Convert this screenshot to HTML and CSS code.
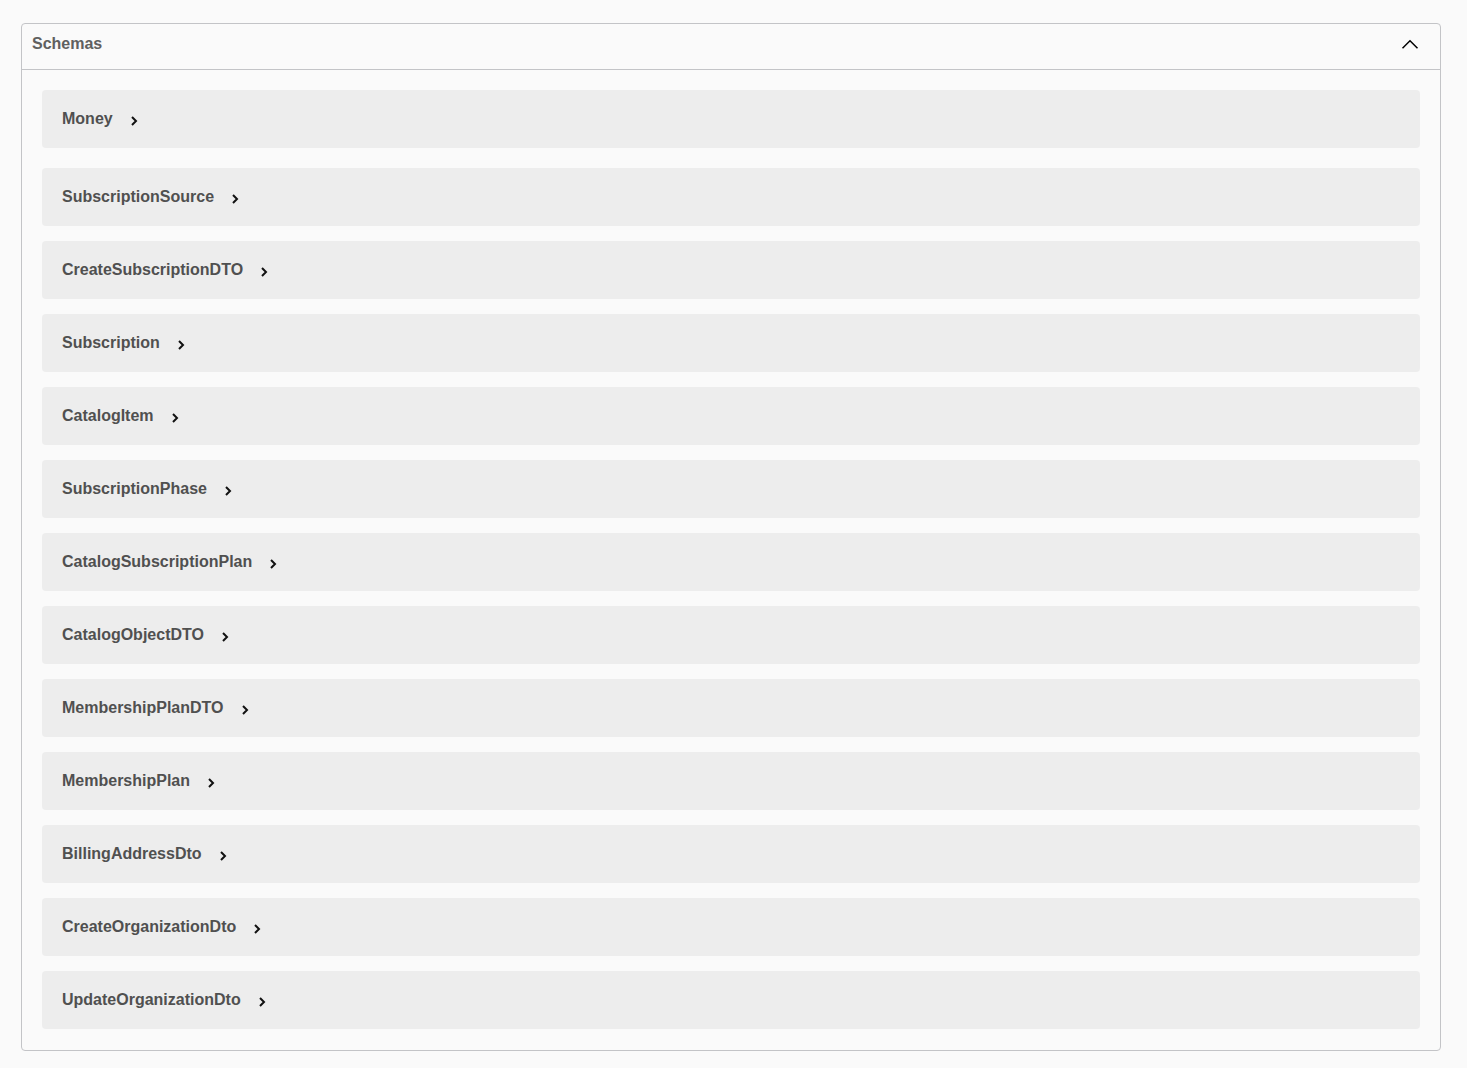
FILE: index.html
```html
<!DOCTYPE html>
<html lang="en">

<head>
    <meta charset="UTF-8">
    <meta name="viewport" content="width=device-width, initial-scale=1.0">
    <title>Schemas</title>
    <link rel="stylesheet" href="styles.css">
</head>

<body>
    <section class="models">
        <h4 class="models-header">
            <span>Schemas</span>
            <svg class="models-arrow" width="20" height="20" viewBox="0 0 20 20">
                <polyline points="2.5,14.3 10,6.8 17.5,14.3" fill="none" stroke="#000" stroke-width="1.5" />
            </svg>
        </h4>
        <div class="models-list">
            <div class="model-container"><span class="model-title">Money</span><svg class="model-toggle" viewBox="0 0 8 12"><polyline points="2,2 6,6 2,10" /></svg></div>
            <div class="model-container"><span class="model-title">SubscriptionSource</span><svg class="model-toggle" viewBox="0 0 8 12"><polyline points="2,2 6,6 2,10" /></svg></div>
            <div class="model-container"><span class="model-title">CreateSubscriptionDTO</span><svg class="model-toggle" viewBox="0 0 8 12"><polyline points="2,2 6,6 2,10" /></svg></div>
            <div class="model-container"><span class="model-title">Subscription</span><svg class="model-toggle" viewBox="0 0 8 12"><polyline points="2,2 6,6 2,10" /></svg></div>
            <div class="model-container"><span class="model-title">CatalogItem</span><svg class="model-toggle" viewBox="0 0 8 12"><polyline points="2,2 6,6 2,10" /></svg></div>
            <div class="model-container"><span class="model-title">SubscriptionPhase</span><svg class="model-toggle" viewBox="0 0 8 12"><polyline points="2,2 6,6 2,10" /></svg></div>
            <div class="model-container"><span class="model-title">CatalogSubscriptionPlan</span><svg class="model-toggle" viewBox="0 0 8 12"><polyline points="2,2 6,6 2,10" /></svg></div>
            <div class="model-container"><span class="model-title">CatalogObjectDTO</span><svg class="model-toggle" viewBox="0 0 8 12"><polyline points="2,2 6,6 2,10" /></svg></div>
            <div class="model-container"><span class="model-title">MembershipPlanDTO</span><svg class="model-toggle" viewBox="0 0 8 12"><polyline points="2,2 6,6 2,10" /></svg></div>
            <div class="model-container"><span class="model-title">MembershipPlan</span><svg class="model-toggle" viewBox="0 0 8 12"><polyline points="2,2 6,6 2,10" /></svg></div>
            <div class="model-container"><span class="model-title">BillingAddressDto</span><svg class="model-toggle" viewBox="0 0 8 12"><polyline points="2,2 6,6 2,10" /></svg></div>
            <div class="model-container"><span class="model-title">CreateOrganizationDto</span><svg class="model-toggle" viewBox="0 0 8 12"><polyline points="2,2 6,6 2,10" /></svg></div>
            <div class="model-container"><span class="model-title">UpdateOrganizationDto</span><svg class="model-toggle" viewBox="0 0 8 12"><polyline points="2,2 6,6 2,10" /></svg></div>
        </div>
    </section>
</body>

</html>
```

FILE: styles.css
```css
body {
    font-family: 'Liberation Sans', Arial, sans-serif;
    background-color: #fafafa;
    color: #3b4151;
    margin: 0;
    padding: 23px 26px 18px 21px;
}

.models {
    border: 1px solid #c3c4c7;
    border-radius: 4px;
}

.models-header {
    display: flex;
    align-items: center;
    justify-content: space-between;
    height: 39px;
    margin: 0;
    padding: 0 20px 6px 10px;
    border-bottom: 1px solid #c3c4c7;
    font-size: 16px;
    font-weight: bold;
    color: #606060;
}

.models-arrow {
    margin-top: 1px;
}

.models-list {
    padding: 20px 20px 21px;
}

.model-container {
    display: flex;
    align-items: center;
    height: 58px;
    padding: 0 20px;
    margin-bottom: 15px;
    background-color: #ededed;
    border-radius: 4px;
}

.model-container:first-child {
    margin-bottom: 20px;
}

.model-container:last-child {
    margin-bottom: 0;
}

.model-title {
    font-size: 16px;
    font-weight: bold;
    color: #505050;
}

.model-toggle {
    width: 8px;
    height: 12px;
    margin-left: 17px;
    margin-top: 3px;
    fill: none;
    stroke: #111;
    stroke-width: 2;
}
```
